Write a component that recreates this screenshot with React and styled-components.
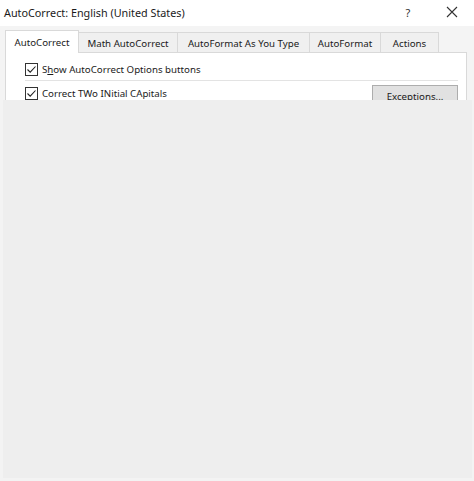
import React from "react";
import styled, { createGlobalStyle } from "styled-components";

const Global = createGlobalStyle`
  html, body { margin: 0; padding: 0; }
  body {
    font-family: "Noto Sans", "Open Sans", sans-serif;
    font-size: 10px;
    color: #1a1a1a;
    background: #eeeeee;
  }
`;

const Window = styled.div`
  width: 474px;
  height: 481px;
  display: flex;
  flex-direction: column;
  background: #eeeeee;
  overflow: hidden;
`;

const Dialog = styled.div`
  height: 100px;
  flex: none;
  display: flex;
  flex-direction: column;
  background: #f4f4f4;
  overflow: hidden;
`;

const Filler = styled.div`
  flex: 1;
  background: #eeeeee;
  border: 0 solid #f3f3f3;
  border-width: 0 2px 3px 3px;
`;

const TitleBar = styled.div`
  height: 26px;
  flex: none;
  display: flex;
  align-items: center;
  gap: 30px;
  padding: 0 15px 0 4px;
  background: #ffffff;
`;

const Title = styled.div`
  flex: 1;
  font-size: 10.8px;
  color: #1a1a1a;
  margin-top: -2px;
`;

const TitleBtn = styled.div`
  width: 14px;
  display: flex;
  justify-content: center;
  margin-top: -2px;
  color: #333;
  font-size: 11px;
`;

const Body = styled.div`
  flex: 1;
  display: flex;
  flex-direction: column;
  padding: 2px 7px 0 5px;
`;

const TabStrip = styled.div`
  display: flex;
  align-items: flex-end;
  height: 24px;
  flex: none;
`;

const Tab = styled.div`
  width: ${({ w }) => w}px;
  height: ${({ active }) => (active ? "23px" : "20px")};
  flex: none;
  display: flex;
  align-items: center;
  justify-content: center;
  box-sizing: border-box;
  border: 1px solid #d9d9d9;
  border-bottom: none;
  margin-left: -1px;
  padding-top: ${({ active }) => (active ? "0" : "1px")};
  background: ${({ active }) => (active ? "#ffffff" : "#f0f0f0")};
  font-size: 9.7px;
  white-space: nowrap;
  color: #1a1a1a;
  position: relative;
  z-index: ${({ active }) => (active ? 1 : 0)};
  margin-bottom: ${({ active }) => (active ? "-1px" : "0")};
  &:first-child { margin-left: 0; }
`;

const Panel = styled.div`
  flex: 1;
  background: #ffffff;
  border: 1px solid #d9d9d9;
  border-bottom: none;
  padding: 8px 8px 0 19px;
  display: flex;
  flex-direction: column;
`;

const Row = styled.div`
  display: flex;
  align-items: center;
  gap: 4px;
  height: 17px;
  flex: none;
`;

const Box = styled.span`
  width: 11px;
  height: 11px;
  border: 1px solid #333;
  display: flex;
  align-items: center;
  justify-content: center;
  background: #fff;
  flex: none;
`;

const Label = styled.span`
  font-size: 9.7px;
  white-space: nowrap;
  flex: 1;
`;

const Sep = styled.div`
  height: 1px;
  flex: none;
  background: #e3e3e3;
  margin: 2px 0 4px 0;
`;

const Button = styled.div`
  width: 86px;
  height: 22px;
  align-self: flex-start;
  box-sizing: border-box;
  border: 1px solid #adadad;
  background: #e1e1e1;
  display: flex;
  justify-content: center;
  padding-top: 4px;
  font-size: 9.7px;
  white-space: nowrap;
  flex: none;
`;

const Check = () => (
  <Box>
    <svg width="11" height="11" viewBox="0 0 11 11">
      <path d="M1.5 5.5 L4.2 8.2 L9.5 2.5" fill="none" stroke="#222" strokeWidth="1.1" />
    </svg>
  </Box>
);

const CloseIcon = () => (
  <svg width="12" height="12" viewBox="0 0 12 12">
    <path d="M1 1 L11 11 M11 1 L1 11" stroke="#333" strokeWidth="1.1" />
  </svg>
);

const tabs = [
  { label: "AutoCorrect", w: 74, active: true },
  { label: "Math AutoCorrect", w: 100 },
  { label: "AutoFormat As You Type", w: 133 },
  { label: "AutoFormat", w: 72 },
  { label: "Actions", w: 59 },
];

export default function App() {
  return (
    <>
      <Global />
      <Window>
        <Dialog>
          <TitleBar>
            <Title>AutoCorrect: English (United States)</Title>
            <TitleBtn>?</TitleBtn>
            <TitleBtn><CloseIcon /></TitleBtn>
          </TitleBar>
          <Body>
            <TabStrip>
              {tabs.map((t) => (
                <Tab key={t.label} active={t.active} w={t.w}>{t.label}</Tab>
              ))}
            </TabStrip>
            <Panel>
              <Row>
                <Check />
                <Label>S<u>h</u>ow AutoCorrect Options buttons</Label>
              </Row>
              <Sep />
              <Row>
                <Check />
                <Label>Correct TWo INitial CApitals</Label>
                <Button>Exceptions...</Button>
              </Row>
            </Panel>
          </Body>
        </Dialog>
        <Filler />
      </Window>
    </>
  );
}
